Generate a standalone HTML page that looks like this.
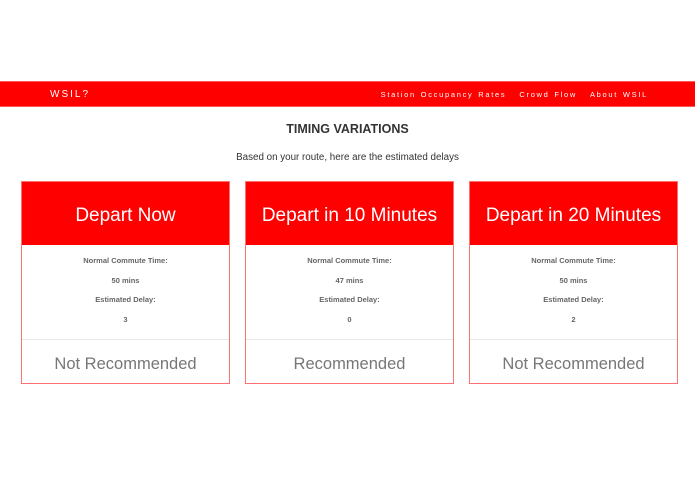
<!DOCTYPE html>
<html><head><style>
body{margin:0;width:695px;height:494px;background:#fff;font-family:"Liberation Sans",sans-serif;position:relative;overflow:hidden}
.nav{position:absolute;left:0;top:81px;width:695px;height:26px;background:#ff0000;color:#fff;border-top:1px solid #f55;border-bottom:1px solid #f55;box-sizing:border-box}
.brand{position:absolute;left:50px;top:7px;font-size:10px;letter-spacing:2px}
.links{position:absolute;right:47px;top:8px;font-size:7.5px;letter-spacing:1.7px;word-spacing:1px}
.links span{margin-left:13px}
h1{position:absolute;top:122px;left:0;width:695px;text-align:center;font-size:12.5px;font-weight:bold;color:#333;margin:0}
.sub{position:absolute;top:152px;left:0;width:695px;text-align:center;font-size:9.8px;color:#333}
.card{position:absolute;top:181px;width:209px;height:203px;border:1px solid #ff7070;box-sizing:border-box;background:#fff}
.hd{height:63px;background:#ff0000;color:#fff;font-size:19px;text-align:center;line-height:68px}
.bd{text-align:center;font-size:7.5px;color:#666;height:94px;border-bottom:1px solid #e8e8e8}
.bd div{height:19.5px;line-height:19.5px;font-weight:bold}
.ft{text-align:center;font-size:16.5px;color:#777;line-height:48px}
</style></head><body>
<div class="nav"><div class="brand">WSIL?</div><div class="links"><span>Station Occupancy Rates</span><span>Crowd Flow</span><span>About WSIL</span></div></div>
<h1>TIMING VARIATIONS</h1>
<div class="sub">Based on your route, here are the estimated delays</div>
<div class="card" style="left:21px"><div class="hd">Depart Now</div><div class="bd"><div style="height:6px"></div><div>Normal Commute Time:</div><div>50 mins</div><div>Estimated Delay:</div><div>3</div></div><div class="ft">Not Recommended</div></div>
<div class="card" style="left:245px"><div class="hd">Depart in 10 Minutes</div><div class="bd"><div style="height:6px"></div><div>Normal Commute Time:</div><div>47 mins</div><div>Estimated Delay:</div><div>0</div></div><div class="ft">Recommended</div></div>
<div class="card" style="left:469px"><div class="hd">Depart in 20 Minutes</div><div class="bd"><div style="height:6px"></div><div>Normal Commute Time:</div><div>50 mins</div><div>Estimated Delay:</div><div>2</div></div><div class="ft">Not Recommended</div></div>
</body></html>
